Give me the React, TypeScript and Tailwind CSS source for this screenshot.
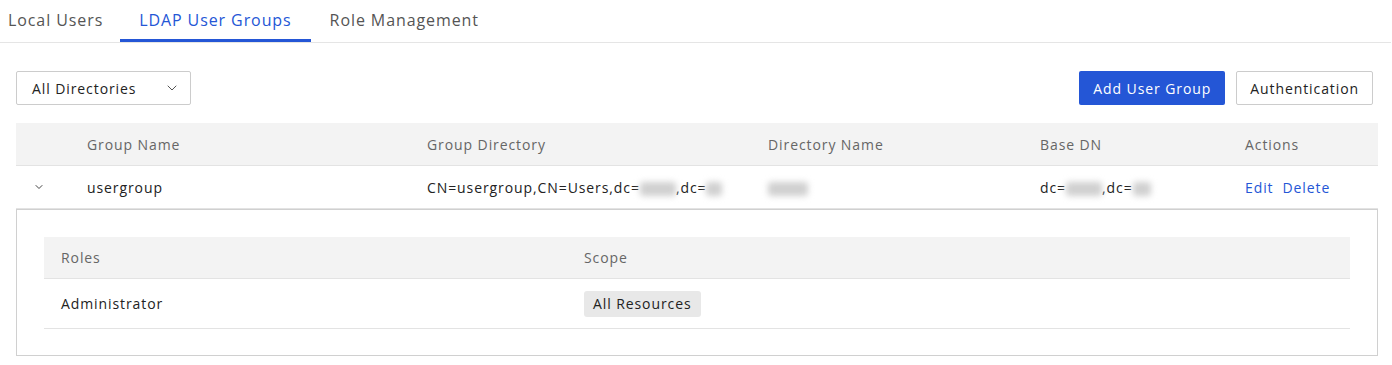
import { ChevronDown } from 'lucide-react';

const tabs = ['Local Users', 'LDAP User Groups', 'Role Management'];

// blurred placeholder for masked values
function Masked({ w }: { w: number }) {
  return (
    <span
      className="inline-block h-[14px] align-middle rounded-[3px] bg-[#d0d0d0] blur-[3px]"
      style={{ width: w }}
    />
  );
}

export default function App() {
  const active = 1;

  return (
    <div className="w-[1392px] h-[365px] bg-white font-['Open_Sans',sans-serif] tracking-[0.065em] text-[14px] text-[#222]">
      {/* Tabs */}
      <div className="flex h-[43px] border-b border-[#e5e5e5] mr-[1px]">
        {tabs.map((t, i) => (
          <div
            key={t}
            className={`flex items-center text-[16px] border-b-[3px] ${i === 0 ? 'pl-2 pr-[17px]' : 'px-[19px]'} ${
              i === active ? 'border-[#2456d6] text-[#2456d6]' : 'border-transparent text-[#555]'
            }`}
          >
            {t}
          </div>
        ))}
      </div>

      <div className="pl-4 pr-[14px] pt-[28px]">
        {/* Toolbar */}
        <div className="flex items-center justify-between pr-[5px]">
          <button className="flex items-center justify-between w-[175px] h-[34px] pl-[15px] pr-[10px] border border-[#ccc] rounded-[2px] text-[#222]">
            <span>All Directories</span>
            <ChevronDown className="w-4 h-4 text-[#555]" strokeWidth={1.5} />
          </button>
          <div className="flex gap-[11px]">
            <button className="h-[34px] px-[14px] rounded-[2px] bg-[#2456d6] text-white">Add User Group</button>
            <button className="h-[34px] px-[13px] rounded-[2px] border border-[#ccc] text-[#222]">Authentication</button>
          </div>
        </div>

        {/* Table */}
        <div className="mt-[18px]">
          <div className="grid grid-cols-[71px_340px_341px_272px_205px_1fr] h-[43px] items-center bg-[#f3f3f3] border-b border-[#e3e3e3] text-[#666]">
            <div />
            <div>Group Name</div>
            <div>Group Directory</div>
            <div>Directory Name</div>
            <div>Base DN</div>
            <div>Actions</div>
          </div>
          <div className="grid grid-cols-[71px_340px_341px_272px_205px_1fr] h-[43px] items-center border-b border-[#e3e3e3]">
            <div className="flex justify-center pr-[25px]">
              <ChevronDown className="w-3 h-3 text-[#444]" strokeWidth={2} />
            </div>
            <div>usergroup</div>
            <div className="whitespace-nowrap">
              CN=usergroup,CN=Users,dc=<Masked w={36} />,dc=<Masked w={16} />
            </div>
            <div>
              <Masked w={40} />
            </div>
            <div className="whitespace-nowrap">
              dc=<Masked w={36} />,dc=<Masked w={18} />
            </div>
            <div className="flex gap-[9px] text-[#2456d6]">
              <span>Edit</span>
              <span>Delete</span>
            </div>
          </div>

          {/* Expanded panel */}
          <div className="border border-[#d0d0d0] px-[27px] pt-[27px] pb-[26px]">
            <div className="grid grid-cols-[523px_1fr] h-[42px] items-center bg-[#f3f3f3] border-b border-[#e3e3e3] text-[#666]">
              <div className="pl-[17px]">Roles</div>
              <div className="pl-[17px]">Scope</div>
            </div>
            <div className="grid grid-cols-[523px_1fr] h-[50px] items-center border-b border-[#e3e3e3]">
              <div className="pl-[17px]">Administrator</div>
              <div className="pl-[17px]">
                <span className="inline-flex items-center h-[26px] px-[9px] rounded-[3px] bg-[#e8e8e8]">All Resources</span>
              </div>
            </div>
          </div>
        </div>
      </div>
    </div>
  );
}
